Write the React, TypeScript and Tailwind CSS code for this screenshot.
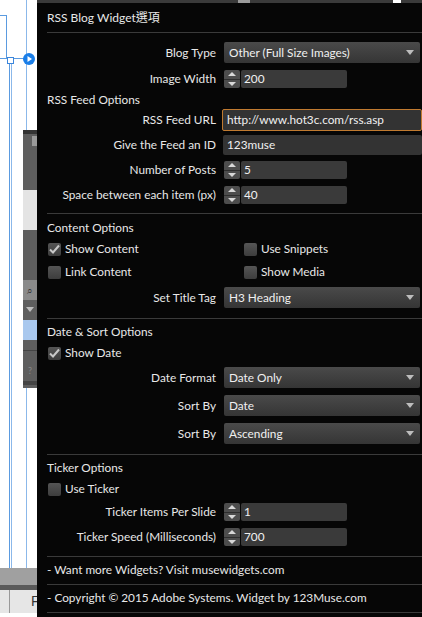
import React from "react";

const font = { fontFamily: "Lato, 'Noto Sans CJK TC', sans-serif" };

function Arrow() {
  return (
    <svg width="8" height="5" viewBox="0 0 8 5" className="shrink-0">
      <path d="M0 0 L8 0 L4 5 Z" fill="#bdbdbd" />
    </svg>
  );
}

function Select({ value }: { value: string }) {
  return (
    <div className="flex h-[21px] w-[196px] items-center justify-between rounded-[2px] bg-gradient-to-b from-[#4a4a4a] to-[#353535] pl-[5px] pr-[6px] text-[#f0f0f0]">
      <span>{value}</span>
      <Arrow />
    </div>
  );
}

function Spinner({ value }: { value: string }) {
  return (
    <div className="flex h-[18px] items-stretch gap-px">
      <div className="flex w-[16px] flex-col rounded-[2px] bg-[#4d4d4d]">
        <div className="flex flex-1 items-center justify-center border-b border-[#2e2e2e]">
          <svg width="8" height="4" viewBox="0 0 8 4">
            <path d="M0 4 L8 4 L4 0 Z" fill="#d8d8d8" />
          </svg>
        </div>
        <div className="flex flex-1 items-center justify-center">
          <svg width="8" height="4" viewBox="0 0 8 4">
            <path d="M0 0 L8 0 L4 4 Z" fill="#d8d8d8" />
          </svg>
        </div>
      </div>
      <div className="flex w-[106px] items-center rounded-[2px] bg-[#3a3a3a] pl-[3px] text-[#f0f0f0]">
        {value}
      </div>
    </div>
  );
}

function Row({ label, mt, children }: { label: string; mt: string; children: React.ReactNode }) {
  return (
    <div className={`flex items-center ${mt}`}>
      <div className="w-[169px] shrink-0 text-right">{label}</div>
      <div className="ml-[8px] flex items-center">{children}</div>
    </div>
  );
}

function Check({ label, checked }: { label: string; checked?: boolean }) {
  return (
    <div className="flex h-[16px] items-center">
      <div className="ml-px flex h-[13px] w-[13px] items-center justify-center rounded-[2px] bg-gradient-to-b from-[#555] to-[#3d3d3d]">
        {checked && (
          <svg width="11" height="10" viewBox="0 0 11 10">
            <path d="M1 5.5 L4 8.5 L10 1.5" stroke="#c8c8c8" strokeWidth="2" fill="none" />
          </svg>
        )}
      </div>
      <span className="ml-[4px]">{label}</span>
    </div>
  );
}

function Sep({ mt }: { mt: string }) {
  return <div className={`h-px bg-[#3a3a3a] ${mt}`} />;
}

function Heading({ text, mt }: { text: string; mt: string }) {
  return <div className={`flex h-[16px] items-center ${mt}`}>{text}</div>;
}

function Backdrop() {
  return (
    <>
      {/* top strip */}
      <div className="absolute left-[37px] top-0 h-[3px] w-[385px] bg-[#3a3a3a]" />
      <div className="absolute left-[238px] top-0 h-[3px] w-[12px] bg-[#9a9a9a]" />
      <div className="absolute left-[393px] top-0 h-[3px] w-[8px] bg-white" />
      {/* guides */}
      <div className="absolute left-0 top-[15px] h-px w-[6px] bg-[#5b9be0]" />
      <div className="absolute left-[6px] top-[15px] h-[43px] w-px bg-[#5b9be0]" />
      <div className="absolute left-0 top-[58px] h-px w-[24px] bg-[#5b9be0]" />
      <div className="absolute left-[7px] top-[57px] h-[7px] w-[7px] border border-[#3b86dc] bg-white" />
      <div className="absolute left-[9px] top-[64px] h-[504px] w-px bg-[#5b9be0]" />
      <div className="absolute left-[11px] top-[64px] h-[504px] w-px bg-[#8bb8ea]" />
      <div className="absolute left-[26px] top-0 h-[568px] w-px bg-[#8bb8ea]" />
      <div className="absolute left-[23px] top-[53px] flex h-[12px] w-[12px] items-center justify-center rounded-full bg-[#1a7ee8]">
        <svg width="5" height="6" viewBox="0 0 5 6">
          <path d="M0.5 0 L5 3 L0.5 6 Z" fill="white" />
        </svg>
      </div>
      {/* side panel */}
      <div className="absolute left-[23px] top-[130px] h-[258px] w-[14px] bg-[#5e5e5e]">
        <div className="h-[4px] bg-[#333]" />
        <div className="ml-[9px] mt-[2px] h-[10px] w-[5px] bg-[#9a9a9a]" />
        <div className="mt-[44px] h-[40px] w-[14px] bg-[#e4e4e4]" />
        <div className="mt-[50px] flex h-[20px] w-[14px] items-center justify-center bg-[#8a8a8a] text-[10px] text-[#333]">⌕</div>
        <div className="mt-[4px] flex h-[10px] items-center justify-center">
          <Arrow />
        </div>
        <div className="mt-[6px] h-[20px] w-[14px] bg-[#a9c8ee]" />
        <div className="mt-[10px] h-px bg-[#444]" />
        <div className="mt-[14px] flex h-[12px] items-center justify-center text-[9px] text-[#888]">?</div>
        <div className="mt-[4px] h-[4px] bg-[#444]" />
      </div>
      {/* bottom bars */}
      <div className="absolute left-0 top-[568px] h-[17px] w-[37px] bg-[#a0a0a0]" />
      <div className="absolute left-0 top-[585px] h-[5px] w-[37px] bg-[#5a5a5a]" />
      <div className="absolute left-0 top-[590px] h-[23px] w-[37px] bg-[#e6e6e6]" />
      <div className="absolute left-[9px] top-[590px] h-[23px] w-px bg-[#999]" />
      <div className="absolute left-[31px] top-[590px] flex h-[23px] items-center text-[13px] text-[#333]" style={font}>
        F
      </div>
      {/* right edge widget */}
      <div className="absolute left-[414px] top-[511px] h-[50px] w-[12px] rounded-[4px] border border-[#888] bg-[#4a4a4a]">
        <div className="ml-[3px] mt-[4px] h-[24px] w-[6px] bg-[#2e6e74]" />
      </div>
    </>
  );
}

export default function App() {
  return (
    <div className="relative h-[617px] w-[422px] overflow-hidden bg-white" style={font}>
      <Backdrop />
      <div className="relative ml-[37px] mt-[3px] h-[614px] w-[385px] bg-[#060606] pl-[10px] text-[11.8px] leading-none text-[#e8e8e8]">
        <div className="flex h-[29px] items-center text-[12px]">RSS Blog Widget選項</div>
        <Sep mt="" />

        <Row label="Blog Type" mt="mt-[9px]">
          <Select value="Other (Full Size Images)" />
        </Row>
        <Row label="Image Width" mt="mt-[7px]">
          <Spinner value="200" />
        </Row>

        <Heading text="RSS Feed Options" mt="mt-[4px]" />
        <Row label="RSS Feed URL" mt="mt-[1px]">
          <div className="-ml-[2px] flex h-[22px] w-[200px] items-center rounded-[2px] border border-[#c07a30] bg-[#333] pl-[4px] text-[#f0f0f0]">
            http://www.hot3c.com/rss.asp
          </div>
        </Row>
        <Row label="Give the Feed an ID" mt="mt-[4px]">
          <div className="-ml-px flex h-[20px] w-[199px] items-center rounded-[2px] bg-[#333] pl-[4px] text-[#f0f0f0]">
            123muse
          </div>
        </Row>
        <Row label="Number of Posts" mt="mt-[6px]">
          <Spinner value="5" />
        </Row>
        <Row label="Space between each item (px)" mt="mt-[7px]">
          <Spinner value="40" />
        </Row>

        <Sep mt="mt-[9px]" />
        <Heading text="Content Options" mt="mt-[6px]" />
        <div className="mt-[5px] grid grid-cols-[196px_1fr]">
          <Check label="Show Content" checked />
          <Check label="Use Snippets" />
        </div>
        <div className="mt-[7px] grid grid-cols-[196px_1fr]">
          <Check label="Link Content" />
          <Check label="Show Media" />
        </div>
        <Row label="Set Title Tag" mt="mt-[7px]">
          <Select value="H3 Heading" />
        </Row>

        <Sep mt="mt-[10px]" />
        <Heading text="Date & Sort Options" mt="mt-[5px]" />
        <div className="mt-[5px]">
          <Check label="Show Date" checked />
        </div>
        <Row label="Date Format" mt="mt-[6px]">
          <Select value="Date Only" />
        </Row>
        <Row label="Sort By" mt="mt-[7px]">
          <Select value="Date" />
        </Row>
        <Row label="Sort By" mt="mt-[7px]">
          <Select value="Ascending" />
        </Row>

        <Sep mt="mt-[10px]" />
        <Heading text="Ticker Options" mt="mt-[5px]" />
        <div className="mt-[5px]">
          <Check label="Use Ticker" />
        </div>
        <Row label="Ticker Items Per Slide" mt="mt-[6px]">
          <Spinner value="1" />
        </Row>
        <Row label="Ticker Speed (Milliseconds)" mt="mt-[7px]">
          <Spinner value="700" />
        </Row>

        <Sep mt="mt-[10px]" />
        <Heading text="- Want more Widgets? Visit musewidgets.com" mt="mt-[5px]" />
        <Sep mt="mt-[6px]" />
        <Heading text="- Copyright © 2015 Adobe Systems. Widget by 123Muse.com" mt="mt-[5px]" />
        <Sep mt="mt-[6px]" />
      </div>
    </div>
  );
}
